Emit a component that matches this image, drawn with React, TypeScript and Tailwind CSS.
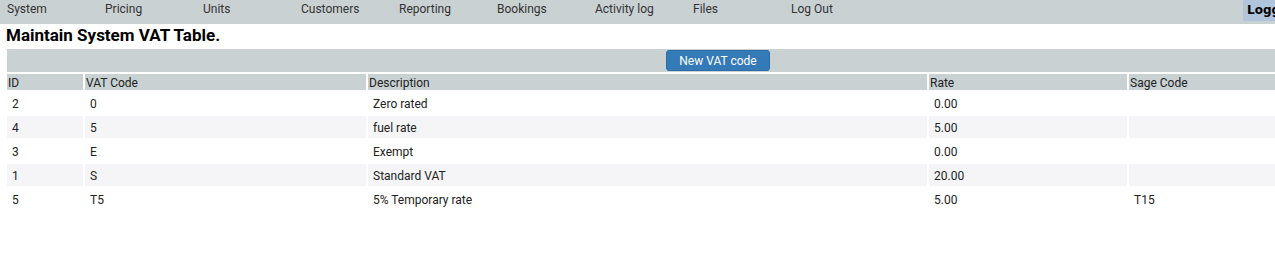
const navItems = ["System", "Pricing", "Units", "Customers", "Reporting", "Bookings", "Activity log", "Files", "Log Out"];

const rows = [
  { id: "2", code: "0", desc: "Zero rated", rate: "0.00", sage: "" },
  { id: "4", code: "5", desc: "fuel rate", rate: "5.00", sage: "" },
  { id: "3", code: "E", desc: "Exempt", rate: "0.00", sage: "" },
  { id: "1", code: "S", desc: "Standard VAT", rate: "20.00", sage: "" },
  { id: "5", code: "T5", desc: "5% Temporary rate", rate: "5.00", sage: "T15" },
];

export default function App() {
  return (
    <div className="w-[1275px] h-[264px] overflow-hidden bg-white text-[#222] font-['Roboto',sans-serif]">
      <div className="flex h-[24px] bg-[#c9d1d3] overflow-hidden">
        {navItems.map((item) => (
          <div key={item} className="w-[98px] shrink-0 pl-[7px] pt-[1px] text-[12px] leading-[17px] text-[#333]">
            {item}
          </div>
        ))}
        <div className="ml-auto w-[32px] h-[21px] shrink-0 bg-[#b0c4de] pl-[4px] pt-[2px] overflow-hidden whitespace-nowrap font-['DejaVu_Sans',sans-serif] font-bold text-[12px] leading-[16px] text-black">
          Logg
        </div>
      </div>

      <div className="h-[23px] pl-[6px] pt-[1px] text-[17px] leading-[21px] font-bold text-black">
        Maintain System VAT Table.
      </div>

      <table className="ml-[5px] w-[1272px] table-fixed border-separate border-spacing-[2px] text-[12px] leading-[14px]">
        <colgroup>
          <col className="w-[76px]" />
          <col className="w-[281px]" />
          <col className="w-[559px]" />
          <col className="w-[198px]" />
          <col />
        </colgroup>
        <tbody>
          <tr>
            <td colSpan={5} className="h-[23px] p-0 pl-[659px] bg-[#c9d1d3] text-left align-middle">
              <button className="h-[21px] w-[104px] rounded-[3px] border border-[#2e6da4] bg-[#337ab7] text-white text-[12px] leading-[14px] align-middle">
                New VAT code
              </button>
            </td>
          </tr>
          <tr>
            {["ID", "VAT Code", "Description", "Rate", "Sage Code"].map((h) => (
              <td key={h} className="h-[16px] p-0 pl-[1px] pt-[1px] bg-[#c9d1d3] text-left align-middle">
                {h}
              </td>
            ))}
          </tr>
          {rows.map((r, i) => (
            <tr key={r.id} className={i % 2 === 1 ? "bg-[#f5f5f7]" : "bg-white"}>
              {[r.id, r.code, r.desc, r.rate, r.sage].map((v, j) => (
                <td key={j} className="h-[22px] p-0 pl-[5px] pt-[1px] align-middle">
                  {v}
                </td>
              ))}
            </tr>
          ))}
        </tbody>
      </table>
    </div>
  );
}
